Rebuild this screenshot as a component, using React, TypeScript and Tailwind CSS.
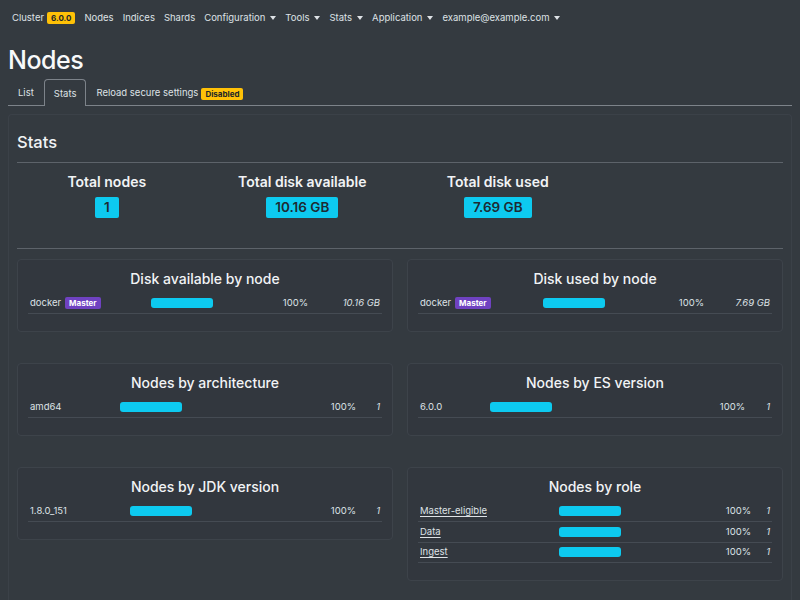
import React from "react";

type Row = { name: string; master?: boolean; link?: boolean; value: string };

type Chart = {
  title: string;
  nameW: string;
  valueW: string;
  rows: Row[];
};

const navItems = [
  { label: "Nodes" },
  { label: "Indices" },
  { label: "Shards" },
  { label: "Configuration", caret: true },
  { label: "Tools", caret: true },
  { label: "Stats", caret: true },
  { label: "Application", caret: true },
  { label: "example@example.com", caret: true },
];

const leftCharts: Chart[] = [
  {
    title: "Disk available by node",
    nameW: "w-[121px]",
    valueW: "w-[72px]",
    rows: [{ name: "docker", master: true, value: "10.16 GB" }],
  },
  {
    title: "Nodes by architecture",
    nameW: "w-[90px]",
    valueW: "w-[24px]",
    rows: [{ name: "amd64", value: "1" }],
  },
  {
    title: "Nodes by JDK version",
    nameW: "w-[100px]",
    valueW: "w-[24px]",
    rows: [{ name: "1.8.0_151", value: "1" }],
  },
];

const rightCharts: Chart[] = [
  {
    title: "Disk used by node",
    nameW: "w-[123px]",
    valueW: "w-[66px]",
    rows: [{ name: "docker", master: true, value: "7.69 GB" }],
  },
  {
    title: "Nodes by ES version",
    nameW: "w-[70px]",
    valueW: "w-[25px]",
    rows: [{ name: "6.0.0", value: "1" }],
  },
  {
    title: "Nodes by role",
    nameW: "w-[139px]",
    valueW: "w-[19px]",
    rows: [
      { name: "Master-eligible", link: true, value: "1" },
      { name: "Data", link: true, value: "1" },
      { name: "Ingest", link: true, value: "1" },
    ],
  },
];

const Caret = () => (
  <span className="ml-[5px] inline-block h-0 w-0 border-x-[3.5px] border-t-[4px] border-x-transparent border-t-[#dee2e6] align-middle" />
);

const ChartCard = ({ chart }: { chart: Chart }) => (
  <div className="rounded-[4px] border border-[#3d434a] bg-[#32373e] px-[10px] pt-[9px] pb-[17px]">
    <h5 className="mb-[4.5px] text-center text-[14px] font-medium leading-[20px] text-[#f1f3f5]">
      {chart.title}
    </h5>
    {chart.rows.map((r) => (
      <div
        key={r.name}
        className="flex h-[20.5px] items-center border-b border-[#454b53] px-[2px] text-[9.5px]"
      >
        <div className={`${chart.nameW} flex shrink-0 items-center gap-[4px]`}>
          <span className={r.link ? "underline underline-offset-2" : ""}>{r.name}</span>
          {r.master && (
            <span className="rounded-[2px] bg-[#6f42c1] px-[4px] text-[8px] font-bold leading-[12px] text-white">
              Master
            </span>
          )}
        </div>
        <div className="h-[10px] w-[62px] shrink-0 rounded-[3px] bg-[#0dcaf0]" />
        <div className="flex-1 text-right">100%</div>
        <div className={`${chart.valueW} shrink-0 text-right italic`}>{r.value}</div>
      </div>
    ))}
  </div>
);

const Total = ({ label, value }: { label: string; value: string }) => (
  <div className="flex flex-col items-center">
    <h5 className="text-[14px] font-semibold leading-[18px] text-[#f1f3f5]">{label}</h5>
    <span className="mt-[6px] rounded-[2px] bg-[#0dcaf0] px-[9px] text-[13.5px] font-semibold leading-[21px] text-[#1d2a33]">
      {value}
    </span>
  </div>
);

export default function App() {
  return (
    <div className="min-h-screen bg-[#343a40] font-['Inter',sans-serif] text-[9.5px] text-[#dee2e6]">
      {/* Navbar */}
      <nav className="flex h-[35px] items-center px-[7.5px] pt-[1px]">
        <a className="flex items-center px-[4.5px]">
          Cluster
          <span className="ml-[3px] rounded-[2px] bg-[#ffc107] px-[4px] text-[8px] font-bold leading-[12px] text-[#212529]">
            6.0.0
          </span>
        </a>
        {navItems.map((n) => (
          <a key={n.label} className="flex items-center px-[4.5px]">
            {n.label}
            {n.caret && <Caret />}
          </a>
        ))}
      </nav>

      <div className="px-[8px]">
        <h1 className="mt-[9px] text-[25px] font-medium leading-[32px] tracking-[-0.5px] text-[#f8f9fa]">
          Nodes
        </h1>

        {/* Tabs */}
        <div className="mt-[4px] flex h-[26px] items-end border-b border-[#7d838a]">
          <a className="flex h-[26px] items-center px-[10px] pt-[3px]">List</a>
          <a className="-mb-px flex h-[27px] items-center rounded-t-[4px] border border-b-0 border-[#7d838a] bg-[#343a40] px-[9px] pt-[3px]">
            Stats
          </a>
          <a className="flex h-[26px] items-center px-[10px] pt-[3px]">
            Reload secure settings
            <span className="ml-[3px] rounded-[2px] bg-[#ffc107] px-[4px] text-[8px] font-bold leading-[12px] text-[#212529]">
              Disabled
            </span>
          </a>
        </div>

        {/* Stats card */}
        <div className="mt-[8px] rounded-t-[4px] border border-b-0 border-[#3b4148] px-[8px] pt-[17px]">
          <h4 className="text-[16.5px] font-medium leading-[20px] text-[#f1f3f5]">Stats</h4>
          <div className="mt-[10px] h-px bg-[#5d636a]" />

          <div className="-mx-[8px] mt-[10px] grid grid-cols-4">
            <Total label="Total nodes" value="1" />
            <Total label="Total disk available" value="10.16 GB" />
            <Total label="Total disk used" value="7.69 GB" />
          </div>

          <div className="mt-[30px] h-px bg-[#5d636a]" />

          <div className="mt-[10px] grid grid-cols-2 gap-x-[14px]">
            <div className="flex flex-col gap-[31px]">
              {leftCharts.map((c) => (
                <ChartCard key={c.title} chart={c} />
              ))}
            </div>
            <div className="flex flex-col gap-[31px]">
              {rightCharts.map((c) => (
                <ChartCard key={c.title} chart={c} />
              ))}
            </div>
          </div>
          <div className="h-[20px]" />
        </div>
      </div>
    </div>
  );
}
